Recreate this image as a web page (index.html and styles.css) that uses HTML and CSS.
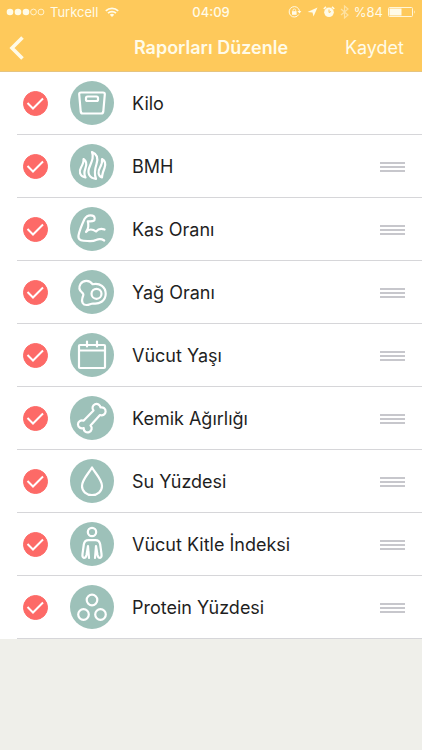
FILE: index.html
```html
<!DOCTYPE html>
<html lang="tr">
<head>
<meta charset="utf-8">
<meta name="viewport" content="width=device-width, initial-scale=1">
<title>Raporları Düzenle</title>
<link rel="stylesheet" href="styles.css">
</head>
<body>
<svg class="defs" aria-hidden="true">
  <symbol id="tick" viewBox="0 0 25 25"><path d="M4.500 12l5.500 5.500L20 7.500"/></symbol>
  <symbol id="grip" viewBox="0 0 25 12"><path d="M0 3h25M0 7h25M0 11h25"/></symbol>
</svg>
<header class="top">
  <div class="status">
    <div class="status-side">
      <svg class="signal" width="39" height="8" viewBox="0 0 39 8"><g fill="currentColor"><circle cx="4" cy="4" r="3.300"/><circle cx="12" cy="4" r="3.300"/><circle cx="20" cy="4" r="3.300"/></g><g fill="none" stroke="currentColor" stroke-width=".8"><circle cx="27.500" cy="4" r="2.900"/><circle cx="35" cy="4" r="2.900"/></g></svg>
      <span>Turkcell</span>
      <svg class="wifi" width="14" height="10" viewBox="0 0 14 10"><g fill="none" stroke="currentColor" stroke-width="1.700"><path d="M.8 3.800a9 9 0 0 1 12.400 0M3 6.200a5.800 5.800 0 0 1 8 0"/></g><path d="M4.800 7.700a3.200 3.200 0 0 1 4.400 0L7 10z" fill="currentColor"/></svg>
    </div>
    <span class="clock">04:09</span>
    <div class="status-side status-end">
      <svg width="14" height="12" viewBox="0 0 14 12"><path d="M10.800 8.500a5.200 5.200 0 1 1 .7-3.400" fill="none" stroke="currentColor"/><path d="M9.400 5h4L11.500 7.600z" fill="currentColor"/><rect x="4" y="5.200" width="4.600" height="3.600" fill="currentColor"/><path d="M5 5.500V4.300a1.300 1.300 0 0 1 2.600 0v1.200" fill="none" stroke="currentColor" stroke-width=".8"/></svg>
      <svg width="11" height="10" viewBox="0 0 11 10"><path d="M10.500.5L6.500 9.500 5.500 5.500.5 5z" fill="currentColor"/></svg>
      <svg width="12" height="12" viewBox="0 0 12 12"><circle cx="6" cy="6.300" r="4.800" fill="currentColor"/><path d="M.8 3L3 .9M11.200 3L9 .9" stroke="currentColor" stroke-width="1.600"/><path d="M6 3.500v3L8 5.500" fill="none" stroke="#fec95b"/></svg>
      <svg class="faint" width="9" height="14" viewBox="0 0 9 14"><path d="M1 4l7 6-3.500 3V1L8 4l-7 6" fill="none" stroke="currentColor" stroke-width="1.200"/></svg>
      <span>%84</span>
      <svg width="28" height="10" viewBox="0 0 28 10"><rect x=".5" y=".5" width="24" height="9" rx="1" fill="none" stroke="currentColor" stroke-width=".9"/><rect x="1.500" y="1.500" width="12" height="7" fill="currentColor"/><path d="M26 3.200q1.500 1.800 0 3.600z" fill="currentColor"/></svg>
    </div>
  </div>
  <nav class="bar">
    <button class="back" type="button" aria-label="Geri"><svg width="18" height="26" viewBox="0 0 18 26"><path d="M14.500 2.500L4 13l10.500 10.500" fill="none" stroke="currentColor" stroke-width="3.600"/></svg></button>
    <h1>Raporları Düzenle</h1>
    <button class="save" type="button">Kaydet</button>
  </nav>
</header>
<main>
  <ul class="reports">
    <li>
      <span class="check"><input type="checkbox" id="r1" checked><svg><use href="#tick"/></svg></span>
      <svg class="icon" viewBox="0 0 44 44"><path d="M11 11.500h22q2 0 1.800 2l-1.500 17q-.3 2-2 2H12.700q-1.700 0-2-2l-1.500-17q-.2-2 1.800-2z"/><rect x="16" y="15.500" width="12" height="4.500" rx="1.500"/></svg>
      <label for="r1">Kilo</label>
    </li>
    <li>
      <span class="check"><input type="checkbox" id="r2" checked><svg><use href="#tick"/></svg></span>
      <svg class="icon" viewBox="0 0 44 44"><path d="M22 8C27 10 28.500 14 26.500 20C24.500 26 24 30 26 35C19 34 17 29 19.500 23C22 17 24 13 22 8Z"/><path d="M13.500 15C16.500 17 17 20 15.500 24C14 28 14 31 15.500 33.500C9 32 9 27 11 23.500C13 20 14 18 13.500 15Z"/><path d="M32 15C35.500 17 36 20 34.500 24C33 28 32 31 32 33.500C27.500 32 28 27 30 23.500C32 20 32.500 18 32 15Z"/></svg>
      <label for="r2">BMH</label>
      <button class="grip" type="button" aria-label="Taşı"><svg><use href="#grip"/></svg></button>
    </li>
    <li>
      <span class="check"><input type="checkbox" id="r3" checked><svg><use href="#tick"/></svg></span>
      <svg class="icon" viewBox="0 0 44 44"><path d="M34.200 33.500C31 31.500 29 31.800 26 33C23 34.500 20.500 34 17.500 34C13 34 7.500 34 8.500 28.500C9.500 23 12 17.500 14.500 12C16 9.500 17.500 8.300 20.500 8.300C23.500 8.300 24.700 9.500 24.700 11.500C24.700 14 23.500 14.300 20 14.300H17.800C18.800 18 18.500 22 16 25C18.500 22 22.500 21.800 26 24.500C28.500 21.500 31.500 21.200 34.500 22.500"/></svg>
      <label for="r3">Kas Oranı</label>
      <button class="grip" type="button" aria-label="Taşı"><svg><use href="#grip"/></svg></button>
    </li>
    <li>
      <span class="check"><input type="checkbox" id="r4" checked><svg><use href="#tick"/></svg></span>
      <svg class="icon" viewBox="0 0 44 44"><path d="M22.500 14.200C19.500 9.500 13 10 10.500 14C8.500 17.500 9.500 20.500 12 22.500C14 24 13.500 25 12.500 27.500C11 32 13 35 16.500 35C19.500 35 20.500 33.500 23 33.500C29 34.500 35.700 31 35.700 23.800C35.700 17 30 12.500 22.500 14.200Z"/><circle cx="26.500" cy="23.800" r="5"/></svg>
      <label for="r4">Yağ Oranı</label>
      <button class="grip" type="button" aria-label="Taşı"><svg><use href="#grip"/></svg></button>
    </li>
    <li>
      <span class="check"><input type="checkbox" id="r5" checked><svg><use href="#tick"/></svg></span>
      <svg class="icon" viewBox="0 0 44 44"><rect x="9" y="12" width="26" height="23" rx="1"/><path d="M9 17.500h26M17 8.500v5M27 8.500v5"/></svg>
      <label for="r5">Vücut Yaşı</label>
      <button class="grip" type="button" aria-label="Taşı"><svg><use href="#grip"/></svg></button>
    </li>
    <li>
      <span class="check"><input type="checkbox" id="r6" checked><svg><use href="#tick"/></svg></span>
      <svg class="icon" viewBox="0 0 44 44"><path d="M23.500 14.500A4 4 0 1 1 30.500 11.500A4 4 0 1 1 30 19L20.500 29.500A4 4 0 1 1 13.700 32A4 4 0 1 1 13.500 24.700Z"/></svg>
      <label for="r6">Kemik Ağırlığı</label>
      <button class="grip" type="button" aria-label="Taşı"><svg><use href="#grip"/></svg></button>
    </li>
    <li>
      <span class="check"><input type="checkbox" id="r7" checked><svg><use href="#tick"/></svg></span>
      <svg class="icon" viewBox="0 0 44 44"><path d="M22 8.500C19 14 12 20.500 12 27C12 32.500 16.500 36 22 36C27.500 36 32 32.500 32 27C32 20.500 25 14 22 8.500Z"/></svg>
      <label for="r7">Su Yüzdesi</label>
      <button class="grip" type="button" aria-label="Taşı"><svg><use href="#grip"/></svg></button>
    </li>
    <li>
      <span class="check"><input type="checkbox" id="r8" checked><svg><use href="#tick"/></svg></span>
      <svg class="icon" viewBox="0 0 44 44"><circle cx="22" cy="10" r="4.200"/><path d="M19 36L18 24L16.500 33Q15.800 36 14 36Q12 35.500 12.500 32L13.800 22.500Q14.500 18.200 18.500 18.200H25.500Q29.500 18.200 30.200 22.500L31.500 32Q32 35.500 30 36Q28.200 36 27.500 33L26 24L25 36"/></svg>
      <label for="r8">Vücut Kitle İndeksi</label>
      <button class="grip" type="button" aria-label="Taşı"><svg><use href="#grip"/></svg></button>
    </li>
    <li>
      <span class="check"><input type="checkbox" id="r9" checked><svg><use href="#tick"/></svg></span>
      <svg class="icon" viewBox="0 0 44 44"><circle cx="22" cy="15" r="5.300"/><circle cx="13.500" cy="29.500" r="5.300"/><circle cx="30.500" cy="29.500" r="5.300"/></svg>
      <label for="r9">Protein Yüzdesi</label>
      <button class="grip" type="button" aria-label="Taşı"><svg><use href="#grip"/></svg></button>
    </li>
  </ul>
</main>
</body>
</html>
```
FILE: styles.css
```css
* {
  box-sizing: border-box;
}

body {
  margin: 0;
  min-height: 100vh;
  background: #efefea;
  color: #1f1f1f;
  font-family: Inter, "Liberation Sans", sans-serif;
}

button {
  padding: 0;
  border: 0;
  background: none;
  color: inherit;
  font: inherit;
}

.defs {
  position: absolute;
  width: 0;
  height: 0;
}

.top {
  background: #fec95b;
  border-bottom: 1px solid #e5c481;
  color: #fffbe8;
}

.status {
  display: grid;
  grid-template-columns: 1fr auto 1fr;
  align-items: center;
  height: 24px;
  padding: 0 6px;
  font-size: 13px;
}

.status-side {
  display: flex;
  align-items: center;
  gap: 5px;
}

.status-end {
  justify-content: flex-end;
}

.wifi {
  margin-left: 2px;
}

.faint {
  opacity: 0.5;
}

.clock {
  font-weight: 500;
}

.bar {
  display: grid;
  grid-template-columns: 1fr auto 1fr;
  align-items: center;
  height: 47px;
  padding: 0 8px;
  font-size: 18px;
}

.back {
  justify-self: start;
  display: flex;
}

.bar h1 {
  margin: 0;
  font-size: 18px;
  font-weight: 600;
}

.save {
  justify-self: end;
  margin-right: 10px;
}

.reports {
  margin: 0;
  padding: 0;
  list-style: none;
  background: #fff;
}

.reports li {
  display: flex;
  align-items: center;
  height: 63px;
  margin-left: 17px;
  padding: 0 17px 0 6px;
  border-bottom: 1px solid #d6d6d9;
}

.check {
  display: grid;
  width: 25px;
  height: 25px;
}

.check input,
.check svg {
  grid-area: 1 / 1;
  width: 25px;
  height: 25px;
  margin: 0;
}

.check input {
  appearance: none;
  border: 1px solid #c8c7cc;
  border-radius: 50%;
}

.check input:checked {
  border-color: #fd6a67;
  background: #fd6a67;
}

.check svg {
  pointer-events: none;
  fill: none;
  stroke: #fff;
  stroke-width: 2;
}

.check input:not(:checked) + svg {
  visibility: hidden;
}

.icon {
  width: 44px;
  height: 44px;
  margin: 0 18px 0 22px;
  border-radius: 50%;
  background: #9dc1b9;
  fill: none;
  stroke: #fff;
  stroke-width: 2.2;
  stroke-linecap: round;
  stroke-linejoin: round;
}

.reports label {
  flex: 1;
  font-size: 18px;
}

.grip svg {
  display: block;
  width: 25px;
  height: 12px;
  stroke: #c7c7cc;
  stroke-width: 2;
}
```
